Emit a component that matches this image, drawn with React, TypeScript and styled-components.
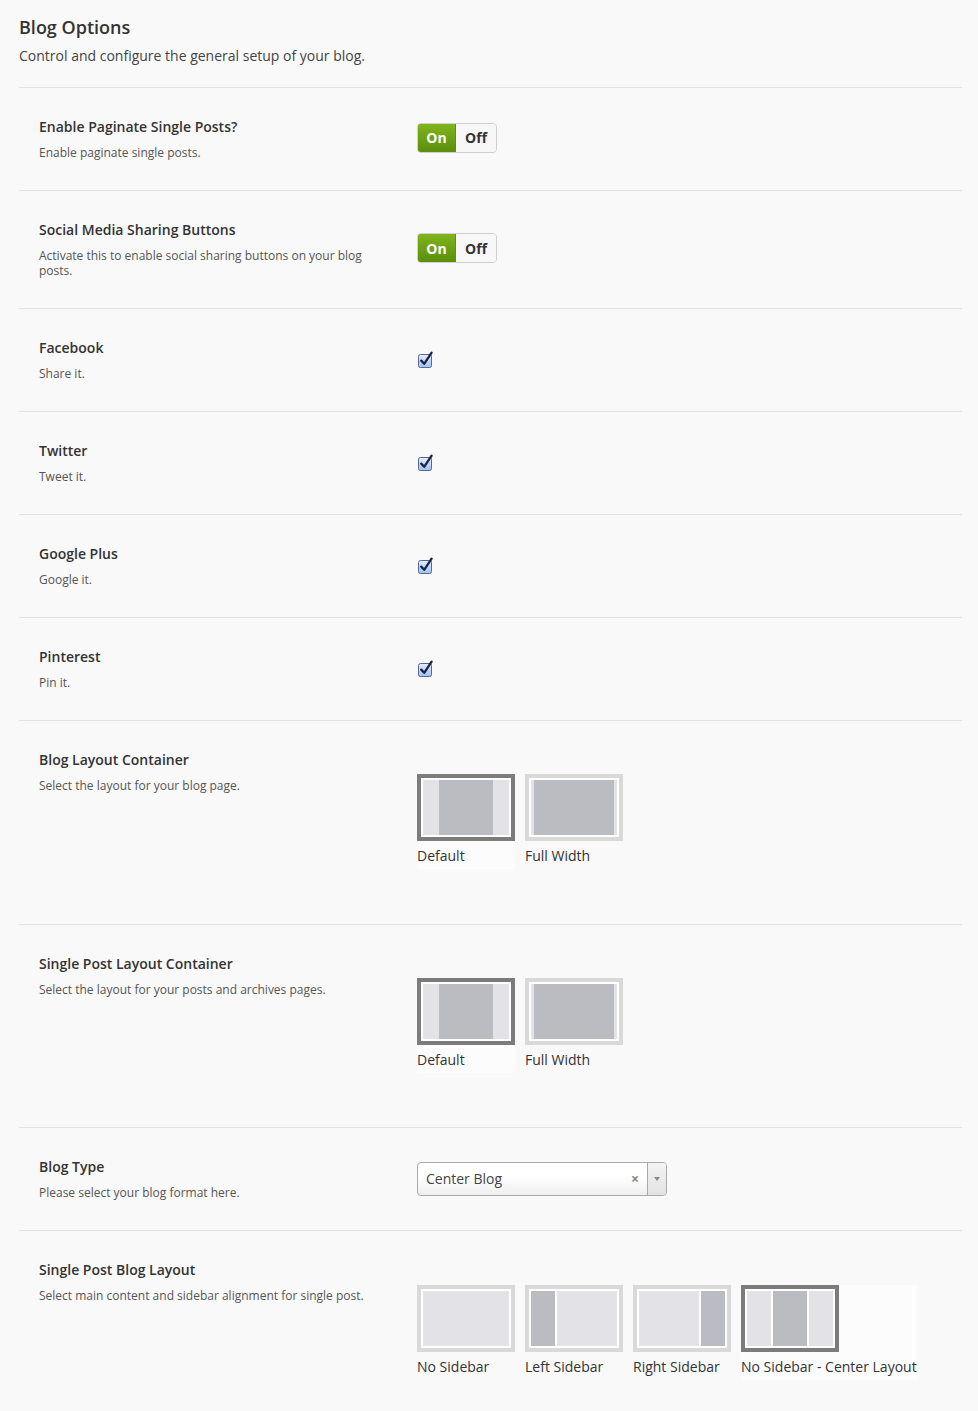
import React from "react";
import styled, { createGlobalStyle } from "styled-components";

const Global = createGlobalStyle`
  html, body { margin: 0; padding: 0; background: #f9f9f9; }
  body { font-family: "Open Sans", "DejaVu Sans", sans-serif; color: #333; }
  * { box-sizing: border-box; }
`;

const Page = styled.div`
  padding: 15px 16px 0 19px;
`;

const Header = styled.header`
  padding-bottom: 21px;
  border-bottom: 1px solid #e2e2e2;
`;

const PageTitle = styled.h1`
  margin: 0;
  font-size: 18px;
  line-height: 24px;
  font-weight: 600;
  color: #333;
`;

const PageSub = styled.p`
  margin: 7px 0 0;
  font-size: 14px;
  line-height: 20px;
  color: #444;
`;

const Row = styled.section`
  display: grid;
  grid-template-columns: 340px 1fr;
  column-gap: 38px;
  padding: 29px 0 30px 20px;
  border-bottom: 1px solid #e2e2e2;
  &:last-child { border-bottom: none; }
`;

const Label = styled.div``;

const RowTitle = styled.h3`
  margin: 0;
  font-size: 14px;
  line-height: 20px;
  font-weight: 600;
  color: #333;
`;

const RowDesc = styled.p`
  margin: 8px 0 0;
  font-size: 12px;
  line-height: 15px;
  color: #555;
`;

const Control = styled.div<{ $top: number; $bottom?: number; $center?: boolean }>`
  align-self: ${(p) => (p.$center ? "center" : "start")};
  padding-top: ${(p) => p.$top}px;
  padding-bottom: ${(p) => p.$bottom ?? 0}px;
`;

const Switch = styled.div`
  display: inline-flex;
  vertical-align: top;
  height: 30px;
  margin-top: -2px;
  border: 1px solid #cfcfcf;
  border-radius: 4px;
  overflow: hidden;
  font-size: 14px;
  font-weight: 700;
`;

const SwitchPart = styled.span<{ $on?: boolean }>`
  display: flex;
  align-items: center;
  justify-content: center;
  width: ${(p) => (p.$on ? 39 : 40)}px;
  color: ${(p) => (p.$on ? "#fff" : "#333")};
  background: ${(p) =>
    p.$on ? "linear-gradient(#7fb51c, #5a8e0c)" : "#f7f7f7"};
  border: ${(p) => (p.$on ? "1px solid #5e8f12" : "none")};
  margin: ${(p) => (p.$on ? "-1px 0 -1px -1px" : "0")};
  border-radius: ${(p) => (p.$on ? "4px 0 0 4px" : "0")};
`;

const Check = styled.svg`
  display: block;
  margin-left: 1px;
`;

const Choices = styled.div`
  display: flex;
  gap: 10px;
  align-items: flex-start;
`;

const Choice = styled.div<{ $sel?: boolean }>`
  display: flex;
  flex-direction: column;
  min-width: 98px;
  padding-bottom: 3px;
  background: ${(p) => (p.$sel ? "#fcfcfc" : "transparent")};
`;

const Thumb = styled.div<{ $sel?: boolean }>`
  width: 98px;
  height: 67px;
  border: 4px solid ${(p) => (p.$sel ? "#7c7c7c" : "#d9d9d9")};
  background: #fff;
  padding: 2px;
  display: flex;
`;

const Block = styled.div<{ $w?: number; $dark?: boolean; $gap?: number }>`
  ${(p) => (p.$w ? `width: ${p.$w}px; flex: none;` : "flex: 1;")}
  background: ${(p) => (p.$dark ? "#bbbbc2" : "#e2e2e7")};
  margin-left: ${(p) => p.$gap ?? 0}px;
`;

const ChoiceLabel = styled.span`
  margin-top: 5px;
  font-size: 14px;
  line-height: 20px;
  color: #333;
  white-space: nowrap;
`;

const Select = styled.div`
  display: flex;
  width: 250px;
  height: 34px;
  border: 1px solid #aaa;
  border-radius: 4px;
  background: linear-gradient(#fff 45%, #eee);
  font-size: 14px;
  color: #444;
`;

const SelectText = styled.span`
  flex: 1;
  display: flex;
  align-items: center;
  padding-left: 8px;
`;

const Clear = styled.span`
  display: flex;
  align-items: center;
  padding-right: 8px;
  color: #888;
  font-size: 14px;
  font-weight: 700;
`;

const Arrow = styled.span`
  width: 19px;
  border-left: 1px solid #aaa;
  display: flex;
  align-items: center;
  justify-content: center;
  background: linear-gradient(#f4f4f4, #e2e2e2);
  border-radius: 0 3px 3px 0;
  &::after {
    content: "";
    border-left: 3px solid transparent;
    border-right: 3px solid transparent;
    border-top: 4px solid #888;
  }
`;

const CheckBox = () => (
  <Check width="17" height="17" viewBox="0 0 17 17">
    <defs>
      <linearGradient id="cbg" x1="0" y1="0" x2="0" y2="1">
        <stop offset="0" stopColor="#e4efff" />
        <stop offset="1" stopColor="#9fc2ee" />
      </linearGradient>
    </defs>
    <rect x="0.5" y="3.5" width="13" height="13" rx="2" fill="url(#cbg)" stroke="#55669a" />
    <path d="M3.2 9.6 L6.2 12.8 L13.6 1.6" fill="none" stroke="#1a2546" strokeWidth="2.3" strokeLinecap="round" strokeLinejoin="round" />
  </Check>
);

const OnOff = () => (
  <Switch>
    <SwitchPart $on>On</SwitchPart>
    <SwitchPart>Off</SwitchPart>
  </Switch>
);

type ThumbKind = "default" | "full" | "none" | "left" | "right" | "center";

const ThumbArt = ({ kind }: { kind: ThumbKind }) => {
  switch (kind) {
    case "default":
      return (
        <>
          <Block $w={16} />
          <Block $dark />
          <Block $w={16} />
        </>
      );
    case "full":
      return (
        <>
          <Block $w={3} />
          <Block $dark />
          <Block $w={3} />
        </>
      );
    case "none":
      return <Block />;
    case "left":
      return (
        <>
          <Block $w={24} $dark />
          <Block $gap={2} />
        </>
      );
    case "right":
      return (
        <>
          <Block />
          <Block $w={24} $dark $gap={2} />
        </>
      );
    case "center":
      return (
        <>
          <Block $w={24} />
          <Block $dark $gap={2} />
          <Block $w={24} $gap={2} />
        </>
      );
  }
};

const ChoiceList = ({ items }: { items: { kind: ThumbKind; label: string; sel?: boolean }[] }) => (
  <Choices>
    {items.map((it) => (
      <Choice key={it.label} $sel={it.sel}>
        <Thumb $sel={it.sel}>
          <ThumbArt kind={it.kind} />
        </Thumb>
        <ChoiceLabel>{it.label}</ChoiceLabel>
      </Choice>
    ))}
  </Choices>
);

const SimpleRow = ({
  title,
  desc,
  children,
  top = 0,
  bottom,
  center,
}: {
  title: string;
  desc: string;
  children: React.ReactNode;
  top?: number;
  bottom?: number;
  center?: boolean;
}) => (
  <Row>
    <Label>
      <RowTitle>{title}</RowTitle>
      <RowDesc>{desc}</RowDesc>
    </Label>
    <Control $top={top} $bottom={bottom} $center={center}>
      {children}
    </Control>
  </Row>
);

export default function App() {
  return (
    <Page>
      <Global />
      <Header>
        <PageTitle>Blog Options</PageTitle>
        <PageSub>Control and configure the general setup of your blog.</PageSub>
      </Header>
      <SimpleRow title="Enable Paginate Single Posts?" desc="Enable paginate single posts." center>
        <OnOff />
      </SimpleRow>
      <SimpleRow
        title="Social Media Sharing Buttons"
        desc="Activate this to enable social sharing buttons on your blog posts."
        center
      >
        <OnOff />
      </SimpleRow>
      <SimpleRow title="Facebook" desc="Share it." center>
        <CheckBox />
      </SimpleRow>
      <SimpleRow title="Twitter" desc="Tweet it." center>
        <CheckBox />
      </SimpleRow>
      <SimpleRow title="Google Plus" desc="Google it." center>
        <CheckBox />
      </SimpleRow>
      <SimpleRow title="Pinterest" desc="Pin it." center>
        <CheckBox />
      </SimpleRow>
      <SimpleRow title="Blog Layout Container" desc="Select the layout for your blog page." top={24} bottom={25}>
        <ChoiceList
          items={[
            { kind: "default", label: "Default", sel: true },
            { kind: "full", label: "Full Width" },
          ]}
        />
      </SimpleRow>
      <SimpleRow
        title="Single Post Layout Container"
        desc="Select the layout for your posts and archives pages."
        top={24}
        bottom={24}
      >
        <ChoiceList
          items={[
            { kind: "default", label: "Default", sel: true },
            { kind: "full", label: "Full Width" },
          ]}
        />
      </SimpleRow>
      <SimpleRow title="Blog Type" desc="Please select your blog format here." center>
        <Select>
          <SelectText>Center Blog</SelectText>
          <Clear>×</Clear>
          <Arrow />
        </Select>
      </SimpleRow>
      <SimpleRow
        title="Single Post Blog Layout"
        desc="Select main content and sidebar alignment for single post."
        top={25}
        bottom={24}
      >
        <ChoiceList
          items={[
            { kind: "none", label: "No Sidebar" },
            { kind: "left", label: "Left Sidebar" },
            { kind: "right", label: "Right Sidebar" },
            { kind: "center", label: "No Sidebar - Center Layout", sel: true },
          ]}
        />
      </SimpleRow>
    </Page>
  );
}
